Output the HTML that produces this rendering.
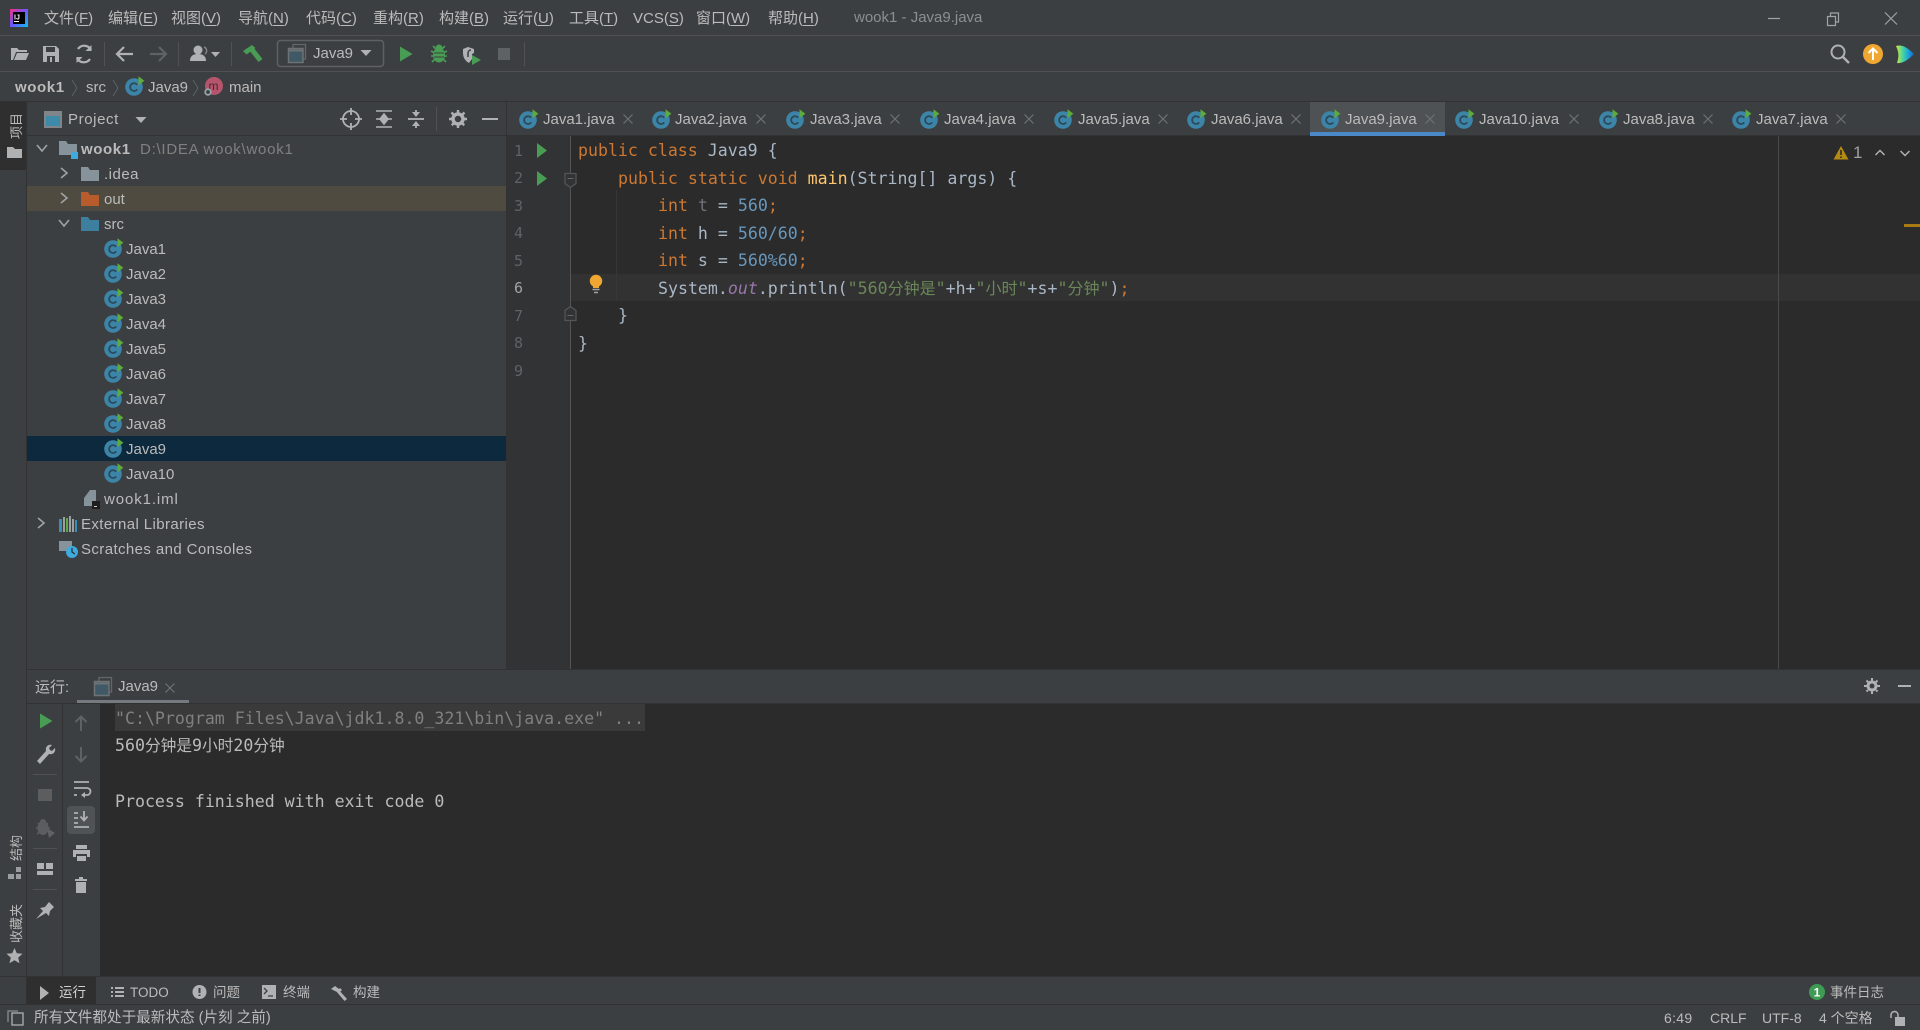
<!DOCTYPE html>
<html lang="zh"><head><meta charset="utf-8"><title>wook1 - Java9.java</title>
<style>
html,body{margin:0;padding:0;width:1920px;height:1030px;overflow:hidden;background:#3c3f41}
body{position:relative;font-family:"Liberation Sans","Noto Sans CJK SC",sans-serif;font-size:15px;color:#bbbbbb}
.b{position:absolute}
.t{position:absolute;white-space:nowrap;line-height:20px;height:20px}
.m{position:absolute;white-space:pre;font-family:"DejaVu Sans Mono","Noto Sans CJK SC",monospace;font-size:16.58px;line-height:27px;height:27px;color:#a9b7c6}
.m i{font-style:normal;font-family:"Noto Sans CJK SC",sans-serif;font-size:16px}
.k{color:#cc7832}.n{color:#6897bb}.s{color:#6a8759}.f{color:#ffc66d}.o{color:#9876aa;font-style:italic}
.ln{position:absolute;left:514px;width:10px;font-family:"DejaVu Sans Mono",monospace;font-size:15px;line-height:20px;color:#606366}
.v{position:absolute;white-space:nowrap;font-size:13px;line-height:16px;transform-origin:0 0;transform:rotate(-90deg);color:#bbb}
.tb{font-size:13.5px}
u{text-decoration-thickness:1px;text-underline-offset:2px}
svg{position:absolute;left:0;top:0}
</style></head><body>

<!-- chrome backgrounds -->
<div class="b" style="left:0;top:35px;width:1920px;height:1px;background:#515151"></div>
<div class="b" style="left:0;top:71px;width:1920px;height:1px;background:#515151"></div>
<div class="b" style="left:0;top:101px;width:1920px;height:1px;background:#323232"></div>
<div class="b" style="left:0;top:102px;width:27px;height:68px;background:#2f2f2f"></div>
<div class="b" style="left:26px;top:102px;width:1px;height:902px;background:#323232"></div>
<div class="b" style="left:27px;top:135px;width:1893px;height:1px;background:#323232"></div>
<div class="b" style="left:506px;top:102px;width:1px;height:567px;background:#323232"></div>

<!-- tree highlights -->
<div class="b" style="left:27px;top:186px;width:479px;height:25px;background:#4f4b41"></div>
<div class="b" style="left:27px;top:436px;width:479px;height:25px;background:#0d293e"></div>

<!-- editor -->
<div class="b" style="left:507px;top:136px;width:1413px;height:533px;background:#2b2b2b"></div>
<div class="b" style="left:507px;top:136px;width:63px;height:533px;background:#313335"></div>
<div class="b" style="left:570px;top:274px;width:1350px;height:27px;background:#323232"></div>
<div class="b" style="left:570px;top:136px;width:1px;height:533px;background:#555555"></div>
<div class="b" style="left:616px;top:190px;width:1px;height:111px;background:#373737"></div>
<div class="b" style="left:1778px;top:136px;width:1px;height:533px;background:#4a4a4a"></div>
<div class="b" style="left:1904px;top:224px;width:16px;height:3px;background:#a87b12"></div>

<!-- active tab -->
<div class="b" style="left:1310px;top:102px;width:135px;height:34px;background:#4e5254"></div>
<div class="b" style="left:1310px;top:132px;width:135px;height:4px;background:#4a88c7"></div>

<!-- run panel -->
<div class="b" style="left:27px;top:669px;width:1893px;height:1px;background:#323232"></div>
<div class="b" style="left:27px;top:703px;width:1893px;height:1px;background:#323232"></div>
<div class="b" style="left:77px;top:700px;width:112px;height:3px;background:#747a80"></div>
<div class="b" style="left:100px;top:704px;width:1820px;height:272px;background:#2b2b2b"></div>
<div class="b" style="left:115px;top:704px;width:530px;height:27px;background:#3a3a3a"></div>
<div class="b" style="left:62px;top:704px;width:1px;height:272px;background:#323232"></div>
<div class="b" style="left:67px;top:806px;width:28px;height:28px;border-radius:4px;background:#4f5356"></div>
<div class="b" style="left:33px;top:774px;width:24px;height:1px;background:#515151"></div>
<div class="b" style="left:33px;top:848px;width:24px;height:1px;background:#515151"></div>
<div class="b" style="left:33px;top:889px;width:24px;height:1px;background:#515151"></div>

<!-- bottom bars -->
<div class="b" style="left:0;top:976px;width:1920px;height:1px;background:#323232"></div>
<div class="b" style="left:27px;top:977px;width:69px;height:27px;background:#2f2f2f"></div>
<div class="b" style="left:0;top:1004px;width:1920px;height:1px;background:#323232"></div>

<!-- menu -->
<span class="t" style="left:44px;top:9px">文件(<u>F</u>)</span>
<span class="t" style="left:108px;top:9px">编辑(<u>E</u>)</span>
<span class="t" style="left:171px;top:9px">视图(<u>V</u>)</span>
<span class="t" style="left:238px;top:9px">导航(<u>N</u>)</span>
<span class="t" style="left:306px;top:9px">代码(<u>C</u>)</span>
<span class="t" style="left:373px;top:9px">重构(<u>R</u>)</span>
<span class="t" style="left:439px;top:9px">构建(<u>B</u>)</span>
<span class="t" style="left:503px;top:9px">运行(<u>U</u>)</span>
<span class="t" style="left:569px;top:9px">工具(<u>T</u>)</span>
<span class="t" style="left:633px;top:9px">VCS(<u>S</u>)</span>
<span class="t" style="left:696px;top:9px">窗口(<u>W</u>)</span>
<span class="t" style="left:768px;top:9px">帮助(<u>H</u>)</span>
<span class="t" style="left:854px;top:8px;color:#8c8f91">wook1 - Java9.java</span>

<!-- toolbar / nav text -->
<span class="t" style="left:313px;top:44px">Java9</span>
<span class="t" style="left:15px;top:78px;font-weight:bold;letter-spacing:.6px">wook1</span>
<span class="t" style="left:86px;top:78px">src</span>
<span class="t" style="left:148px;top:78px">Java9</span>
<span class="t" style="left:229px;top:78px">main</span>

<!-- project header -->
<span class="t" style="left:68px;top:110px;letter-spacing:.6px">Project</span>
<span class="v" style="left:9px;top:139px">项目</span>
<span class="v" style="left:9px;top:861px">结构</span>
<span class="v" style="left:9px;top:943px">收藏夹</span>

<!-- tree -->
<span class="t" style="left:81px;top:140px;font-weight:bold;letter-spacing:.6px">wook1</span>
<span class="t" style="left:140px;top:140px;color:#808080;letter-spacing:.75px">D:\IDEA wook\wook1</span>
<span class="t" style="left:104px;top:165px;letter-spacing:.5px">.idea</span>
<span class="t" style="left:104px;top:190px">out</span>
<span class="t" style="left:104px;top:215px">src</span>
<span class="t" style="left:126px;top:240px">Java1</span>
<span class="t" style="left:126px;top:265px">Java2</span>
<span class="t" style="left:126px;top:290px">Java3</span>
<span class="t" style="left:126px;top:315px">Java4</span>
<span class="t" style="left:126px;top:340px">Java5</span>
<span class="t" style="left:126px;top:365px">Java6</span>
<span class="t" style="left:126px;top:390px">Java7</span>
<span class="t" style="left:126px;top:415px">Java8</span>
<span class="t" style="left:126px;top:440px">Java9</span>
<span class="t" style="left:126px;top:465px">Java10</span>
<span class="t" style="left:104px;top:490px;letter-spacing:.9px">wook1.iml</span>
<span class="t" style="left:81px;top:515px;letter-spacing:.4px">External Libraries</span>
<span class="t" style="left:81px;top:540px;letter-spacing:.4px">Scratches and Consoles</span>

<!-- tabs -->
<span class="t" style="left:543px;top:110px">Java1.java</span>
<span class="t" style="left:675px;top:110px">Java2.java</span>
<span class="t" style="left:810px;top:110px">Java3.java</span>
<span class="t" style="left:944px;top:110px">Java4.java</span>
<span class="t" style="left:1078px;top:110px">Java5.java</span>
<span class="t" style="left:1211px;top:110px">Java6.java</span>
<span class="t" style="left:1345px;top:110px">Java9.java</span>
<span class="t" style="left:1479px;top:110px">Java10.java</span>
<span class="t" style="left:1623px;top:110px">Java8.java</span>
<span class="t" style="left:1756px;top:110px">Java7.java</span>

<!-- gutter numbers -->
<div class="ln" style="top:141px">1</div>
<div class="ln" style="top:168px">2</div>
<div class="ln" style="top:196px">3</div>
<div class="ln" style="top:223px">4</div>
<div class="ln" style="top:251px">5</div>
<div class="ln" style="top:278px;color:#a4a3a3">6</div>
<div class="ln" style="top:306px">7</div>
<div class="ln" style="top:333px">8</div>
<div class="ln" style="top:361px">9</div>

<!-- code -->
<div class="m" style="left:578px;top:137px"><span class="k">public class</span> Java9 {</div>
<div class="m" style="left:618px;top:165px"><span class="k">public static void</span> <span class="f">main</span>(String[] args) {</div>
<div class="m" style="left:658px;top:192px"><span class="k">int</span> <span style="color:#72737a">t</span> = <span class="n">560</span><span class="k">;</span></div>
<div class="m" style="left:658px;top:220px"><span class="k">int</span> h = <span class="n">560/60</span><span class="k">;</span></div>
<div class="m" style="left:658px;top:247px"><span class="k">int</span> s = <span class="n">560%60</span><span class="k">;</span></div>
<div class="m" style="left:658px;top:274px">System.<span class="o">out</span>.println(<span class="s">"560<i>分钟是</i>"</span>+h+<span class="s">"<i>小时</i>"</span>+s+<span class="s">"<i>分钟</i>"</span>)<span class="k">;</span></div>
<div class="m" style="left:618px;top:302px">}</div>
<div class="m" style="left:578px;top:330px">}</div>

<span class="t" style="left:1853px;top:143px;color:#a0a0a0;font-size:17px">1</span>

<!-- run header -->
<span class="t" style="left:35px;top:678px">运行:</span>
<span class="t" style="left:118px;top:677px">Java9</span>

<!-- console -->
<div class="m" style="left:115px;top:705px;color:#808080">"C:\Program Files\Java\jdk1.8.0_321\bin\java.exe" ...</div>
<div class="m" style="left:115px;top:731px;color:#bbbbbb">560<i style="font-size:15.7px">分钟是</i>9<i style="font-size:15.7px">小时</i>20<i style="font-size:15.7px">分钟</i></div>
<div class="m" style="left:115px;top:788px;color:#bbbbbb">Process finished with exit code 0</div>

<!-- bottom tool bar -->
<span class="t tb" style="left:59px;top:983px;color:#d0d0d0">运行</span>
<span class="t tb" style="left:130px;top:983px">TODO</span>
<span class="t tb" style="left:213px;top:983px">问题</span>
<span class="t tb" style="left:283px;top:983px">终端</span>
<span class="t tb" style="left:353px;top:983px">构建</span>
<span class="t tb" style="left:1830px;top:983px">事件日志</span>

<!-- status -->
<span class="t" style="left:34px;top:1008px;font-size:14.6px">所有文件都处于最新状态 (片刻 之前)</span>
<span class="t" style="left:1664px;top:1008px;font-size:14px;letter-spacing:.3px">6:49</span>
<span class="t" style="left:1710px;top:1008px;font-size:14px">CRLF</span>
<span class="t" style="left:1762px;top:1008px;font-size:14px">UTF-8</span>
<span class="t" style="left:1819px;top:1008px;font-size:14px">4 个空格</span>

<svg width="1920" height="1030" viewBox="0 0 1920 1030" fill="none">
<defs>
<linearGradient id="ij" x1="0" y1="0" x2="1" y2="1"><stop offset="0" stop-color="#f5317f"/><stop offset=".5" stop-color="#6b57ff"/><stop offset="1" stop-color="#07c3f2"/></linearGradient>
<linearGradient id="cg" x1="0" y1="0" x2="1" y2="0"><stop offset="0" stop-color="#dbe63c"/><stop offset=".4" stop-color="#3fd3a5"/><stop offset=".72" stop-color="#1a9be0"/><stop offset="1" stop-color="#1565c0"/></linearGradient>
<g id="c"><circle cx="0" cy="1" r="8.800" fill="#3c85a8"/><path d="M3.200-1.200A3.900 3.900 0 1 0 3.200 3.400" stroke="#2b4a5a" stroke-width="1.800"/><path d="M4.500-9.800L10.400-5.200 4.500-.8z" fill="#5cab3c"/></g>
<path id="x" d="M-4.500-4.500L4.500 4.500M4.500-4.500L-4.500 4.500" stroke="#6f7274" stroke-width="1.200"/>
<path id="cr" d="M-3-5L3 0-3 5" stroke="#a0a3a5" stroke-width="1.600"/>
<path id="cd" d="M-5-3L0 3 5-3" stroke="#a0a3a5" stroke-width="1.600"/>
<path id="fo" d="M-9-7h7l2 3H9V7H-9z"/>
<path id="pl" d="M-6-7.500L6.500 0-6 7.500z" fill="#499c54"/>
<g id="wi"><path d="M-4-6v-3.500H8.500V5H6" stroke="#63676a" stroke-width="1.300"/><rect x="-8.500" y="-5.500" width="14.500" height="14" fill="#3f5a66" stroke="#6e7274" stroke-width="1.500"/><path d="M-8-3.500H5.500" stroke="#6e7274" stroke-width="2"/></g>
<path id="ar" d="M-5.500-3H5.500L0 3z" fill="#afb1b3"/>
</defs>

<!-- logo -->
<rect x="10" y="9" width="18" height="18" fill="url(#ij)"/><rect x="13" y="12" width="12" height="12" fill="#000"/>
<text x="14" y="19.500" font-family="Liberation Sans" font-size="7" font-weight="bold" fill="#fff">IJ</text><rect x="14" y="21" width="5" height="1" fill="#fff"/>

<!-- window controls -->
<path d="M1768 18.500h12" stroke="#a0a3a5" stroke-width="1.200"/>
<path d="M1827.500 16.500h8v9h-8zM1830.500 16.500v-3.500h8v9h-3" stroke="#a0a3a5" stroke-width="1.200"/>
<path d="M1885 12.500l12 12M1897 12.500l-12 12" stroke="#a0a3a5" stroke-width="1.200"/>

<!-- toolbar -->
<path d="M11 60V48h6l2 2h8v2H16l-3 8zM14 60l3-7h12l-3 7z" fill="#afb1b3"/>
<path d="M43 46h13l3 3v13H43z" fill="#afb1b3"/><rect x="46" y="47" width="9" height="5" fill="#3c3f41"/><rect x="47" y="56" width="8" height="6" fill="#3c3f41"/><rect x="50" y="57" width="2" height="5" fill="#afb1b3"/>
<path d="M91 50a7.500 7.500 0 0 0-13-1M77 58a7.500 7.500 0 0 0 13 1" stroke="#afb1b3" stroke-width="2.200"/><path d="M91.500 45v6h-6zM76.500 63v-6h6z" fill="#afb1b3"/>
<path d="M104.500 42v24M178.500 42v24M231.500 42v24M524.500 42v24" stroke="#515151"/>
<path d="M117 54h16M124 47l-7 7 7 7" stroke="#afb1b3" stroke-width="2.200"/>
<path d="M150 54h16M159 47l7 7-7 7" stroke="#5f6264" stroke-width="2.200"/>
<circle cx="198" cy="50" r="4.500" fill="#afb1b3"/><path d="M190 61c0-5 3-7 8-7s8 2 8 7z" fill="#afb1b3"/><path d="M204 47a4 4 0 0 1 1 7" stroke="#7f8285" stroke-width="1.500"/><path d="M211 52h9l-4.500 5z" fill="#afb1b3"/>
<path d="M243 51l9-6 3.500 3-9 6.500z" fill="#499c54"/><path d="M249 50l4-3 9.500 12-4 3z" fill="#499c54"/>
<rect x="277.500" y="40.500" width="106" height="26" rx="3" stroke="#5e6163" stroke-width="1.500"/>
<use href="#wi" x="297" y="54"/><use href="#ar" x="366" y="53"/>
<use href="#pl" x="406" y="54"/>
<g fill="#499c54"><ellipse cx="439" cy="55" rx="6" ry="7.500"/><circle cx="439" cy="48" r="3.500"/><path d="M433 46l3 3M445 46l-3 3M431 51l4 2M447 51l-4 2M431 56h4M447 56h-4M432 62l3-3M446 62l-3-3" stroke="#499c54" stroke-width="1.600"/></g><path d="M434 53h10M434 57h10" stroke="#3c3f41" stroke-width="1"/>
<path d="M463 49l5-2 6 2v4l-2 1v5l-3 4c-4-2-6-6-6-10z" fill="#afb1b3"/><path d="M472 55l9 5-9 5z" fill="#499c54"/><path d="M471 50a3 3 0 0 0-3 3v4" stroke="#3c3f41" stroke-width="1.500"/>
<rect x="498" y="48" width="12" height="12" fill="#5f6264"/>
<circle cx="1838" cy="52" r="6.500" stroke="#afb1b3" stroke-width="2"/><path d="M1843 57l6 6" stroke="#afb1b3" stroke-width="2.400"/>
<circle cx="1873" cy="54" r="10" fill="#f0a732"/><path d="M1873 60v-11M1868.500 53l4.500-4.500 4.500 4.500" stroke="#fff" stroke-width="2"/>
<path d="M1896 46c7-2 13 3 18 8-5 5-11 10-17 9 2-6 2-11-1-17z" fill="url(#cg)"/>

<!-- nav -->
<path d="M72 80l5 8-5 8M113 80l5 8-5 8M193 80l5 8-5 8" stroke="#5e6163"/>
<use href="#c" x="134" y="86"/>
<circle cx="214" cy="86" r="9" fill="#b4556d"/><text x="208.500" y="90" font-family="Liberation Sans" font-size="12" fill="#4a2730">m</text><circle cx="208" cy="92" r="2.800" stroke="#9aa0a3" stroke-width="1.800" fill="#3c3f41"/>

<!-- left stripe -->
<path d="M7 147h6l2 2h7v9H7z" fill="#afb1b3"/>
<path d="M16 867h5v5h-5zM8 874h6v5H8zM16 874h5v5h-5z" fill="#9a9d9f"/>
<path d="M14.500 948l2.300 5.300 5.700.500-4.300 3.800 1.300 5.600-5-3-5 3 1.300-5.600-4.300-3.800 5.700-.500z" fill="#afb1b3"/>

<!-- project header icons -->
<rect x="44" y="111" width="18" height="17" fill="#7f8588"/><rect x="46" y="116" width="14" height="10" fill="#3d8ba8"/>
<use href="#ar" x="141" y="120"/>
<circle cx="351" cy="119" r="8" stroke="#afb1b3" stroke-width="1.800"/><path d="M351 108v7M351 123v7M340 119h7M355 119h7" stroke="#afb1b3" stroke-width="1.800"/>
<path d="M376 111h16M376 127h16M384 114l-4 5h8zM384 124l-4-5h8z" stroke="#afb1b3" stroke-width="1.500" fill="#afb1b3"/><path d="M376 119h16" stroke="#afb1b3" stroke-width="1.500"/>
<path d="M408 119h16" stroke="#afb1b3" stroke-width="1.800"/><path d="M416 117l-4-5h8zM416 121l-4 5h8z" fill="#afb1b3"/><path d="M416 110v4M416 124v4" stroke="#afb1b3" stroke-width="1.800"/>
<path d="M436.500 107v24" stroke="#515151"/>
<circle cx="458" cy="119" r="5" stroke="#afb1b3" stroke-width="3.500"/><path d="M458 110v18M449 119h18M451.500 112.500l13 13M464.500 112.500l-13 13" stroke="#afb1b3" stroke-width="2.400" stroke-dasharray="3 12"/>
<path d="M482 119h16" stroke="#afb1b3" stroke-width="2"/>

<!-- tree icons -->
<use href="#cd" x="42" y="148"/><use href="#cr" x="64" y="173"/><use href="#cr" x="64" y="198"/><use href="#cd" x="64" y="223"/><use href="#cr" x="41" y="523"/>
<use href="#fo" x="68" y="148" fill="#87939a"/><rect x="71" y="152" width="7" height="7" fill="#3dabe0"/>
<use href="#fo" x="90" y="174" fill="#87939a"/><use href="#fo" x="90" y="199" fill="#b85c2e"/><use href="#fo" x="90" y="224" fill="#3d7f9f"/>
<use href="#c" x="113" y="248"/><use href="#c" x="113" y="273"/><use href="#c" x="113" y="298"/><use href="#c" x="113" y="323"/><use href="#c" x="113" y="348"/><use href="#c" x="113" y="373"/><use href="#c" x="113" y="398"/><use href="#c" x="113" y="423"/><use href="#c" x="113" y="448"/><use href="#c" x="113" y="473"/>
<path d="M84 498l6-8h6v16H84z" fill="#87939a"/><rect x="92" y="501" width="8" height="8" fill="#1e1e1e"/><rect x="94" y="506" width="3" height="1" fill="#ccc"/>
<path d="M63 517h2v15h-2zM69 516h2v16h-2zM72 519h2v13h-2z" fill="#9aa0a3"/><rect x="66" y="518" width="2" height="14" fill="#5cab3c"/><path d="M59 519h3v13h-3zM75 520h2v12h-2z" fill="#3d8eb5"/>
<path d="M59 541h13v10H59z" fill="#87939a"/><circle cx="72" cy="552" r="6" fill="#3dabe0"/><path d="M72 548v4l3 2" stroke="#2b2b2b" stroke-width="1.200"/>

<!-- tabs -->
<use href="#c" x="528" y="119"/><use href="#x" x="628" y="119"/>
<use href="#c" x="661" y="119"/><use href="#x" x="761" y="119"/>
<use href="#c" x="795" y="119"/><use href="#x" x="895" y="119"/>
<use href="#c" x="929" y="119"/><use href="#x" x="1029" y="119"/>
<use href="#c" x="1063" y="119"/><use href="#x" x="1163" y="119"/>
<use href="#c" x="1196" y="119"/><use href="#x" x="1296" y="119"/>
<use href="#c" x="1330" y="119"/><use href="#x" x="1430" y="119"/>
<use href="#c" x="1464" y="119"/><use href="#x" x="1574" y="119"/>
<use href="#c" x="1608" y="119"/><use href="#x" x="1708" y="119"/>
<use href="#c" x="1741" y="119"/><use href="#x" x="1841" y="119"/>

<!-- gutter -->
<path d="M537 143l10 7.500-10 7.500zM537 171l10 7.500-10 7.500z" fill="#499c54"/>
<path d="M565 173.500h11v10l-5.500 4-5.500-4z" stroke="#555" stroke-width="1.300" fill="#313335"/><path d="M567.500 178.500h6" stroke="#666"/>
<path d="M565 320.500h11v-10l-5.500-4-5.500 4z" stroke="#555" stroke-width="1.300" fill="#313335"/><path d="M567.500 315.500h6" stroke="#666"/>
<circle cx="596" cy="281" r="6.200" fill="#f0a732"/><path d="M593 286h6v2h-6z" fill="#f0a732"/><path d="M592.500 289.500h7M594 292.500h4" stroke="#a0a3a5" stroke-width="1.500"/>

<!-- inspection -->
<path d="M1841 146l7.500 13.500h-15z" fill="#b58a13"/><path d="M1841 150v5M1841 156.500v1.500" stroke="#2b2b2b" stroke-width="1.600"/>
<path d="M1875.500 155l4.500-4.500 4.500 4.500M1900.500 151l4.500 4.500 4.500-4.500" stroke="#afb1b3" stroke-width="1.500"/>

<!-- run header -->
<use href="#wi" x="103" y="687"/><use href="#x" x="170" y="688"/>
<circle cx="1872" cy="686" r="4" stroke="#afb1b3" stroke-width="3"/><path d="M1872 678v16M1864 686h16M1866.500 680.500l11 11M1877.500 680.500l-11 11" stroke="#afb1b3" stroke-width="2" stroke-dasharray="2.500 11"/>
<path d="M1898 686h13" stroke="#afb1b3" stroke-width="2"/>

<!-- run toolbar col 1 -->
<use href="#pl" x="46" y="721"/>
<path d="M37 761l9-10c-1-4 2-7 6-6l-3 3 1 2 2 1 3-3c1 4-2 7-6 6l-9 10z" fill="#afb1b3"/>
<rect x="38" y="789" width="14" height="12" fill="#5b5d5f"/>
<g fill="#5b5d5f"><ellipse cx="43" cy="828" rx="5.500" ry="7"/><circle cx="43" cy="822" r="3"/><path d="M38 823l2 2M48 823l-2 2M36 828h3M50 828h-3M37 834l3-2" stroke="#5b5d5f" stroke-width="1.500"/><path d="M47 828l8 5-6 5z" fill="#5f6264"/></g>
<path d="M37 863h7v6h-7zM46 863h7v6h-7zM37 871h16v4H37z" fill="#afb1b3"/>
<path d="M36 919l7-8-3-3 5-1 4-5 5 5-4 4-1 5-3-3z" fill="#afb1b3"/>

<!-- run toolbar col 2 -->
<path d="M81 731v-14M75.500 722l5.500-5.500 5.500 5.500" stroke="#5f6264" stroke-width="2"/>
<path d="M81 747v14M75.500 756l5.500 5.500 5.500-5.500" stroke="#5f6264" stroke-width="2"/>
<path d="M74 782h15M74 788h13a3 3 0 0 1 0 7h-4M74 795h3" stroke="#afb1b3" stroke-width="1.800"/><path d="M85 792l-4 3 4 3z" fill="#afb1b3"/>
<path d="M74 813h4M74 818h4M74 823h4M74 827h15M84 811v9M80.500 816.500l3.500 4 3.500-4" stroke="#afb1b3" stroke-width="1.800"/>
<path d="M76 845h11v4H76zM73 850h17v7h-3v-3H76v3h-3zM77 856h9v5h-9z" fill="#afb1b3"/>
<path d="M75 879h12v2H75zM76 882h10v11H76zM79 877h4v2h-4z" fill="#afb1b3"/>

<!-- bottom tool icons -->
<path d="M40 986l9 7-9 7z" fill="#afb1b3"/>
<path d="M111 987h2v2h-2zM115 987h9v2h-9zM111 991h2v2h-2zM115 991h9v2h-9zM111 995h2v2h-2zM115 995h9v2h-9z" fill="#afb1b3"/>
<circle cx="199.500" cy="992" r="7" fill="#afb1b3"/><path d="M199.500 988v5M199.500 994.500v1.500" stroke="#3c3f41" stroke-width="2"/>
<rect x="262" y="985" width="14" height="14" fill="#afb1b3"/><path d="M264 988l3 3-3 3M268 996h5" stroke="#3c3f41" stroke-width="1.300"/>
<path d="M331 989l4-3 4 3 1-1 2 2-2 2-1-1-2 1zM336 991l2-2 9 10-2.500 2z" fill="#afb1b3"/>
<circle cx="1817" cy="992" r="8" fill="#3f9b53"/><text x="1817" y="996.500" text-anchor="middle" font-family="Liberation Sans" font-size="12" font-weight="bold" fill="#fff">1</text>

<!-- status icons -->
<rect x="12" y="1013" width="11" height="12" stroke="#afb1b3" stroke-width="1.300"/><path d="M8 1022v-11h10" stroke="#8a8d8f" stroke-width="1.300"/>
<rect x="1895" y="1017" width="10" height="9" fill="#afb1b3"/><path d="M1891 1018v-3a3.500 3.500 0 0 1 7 0v2" stroke="#afb1b3" stroke-width="1.500"/>
</svg>
</body></html>
